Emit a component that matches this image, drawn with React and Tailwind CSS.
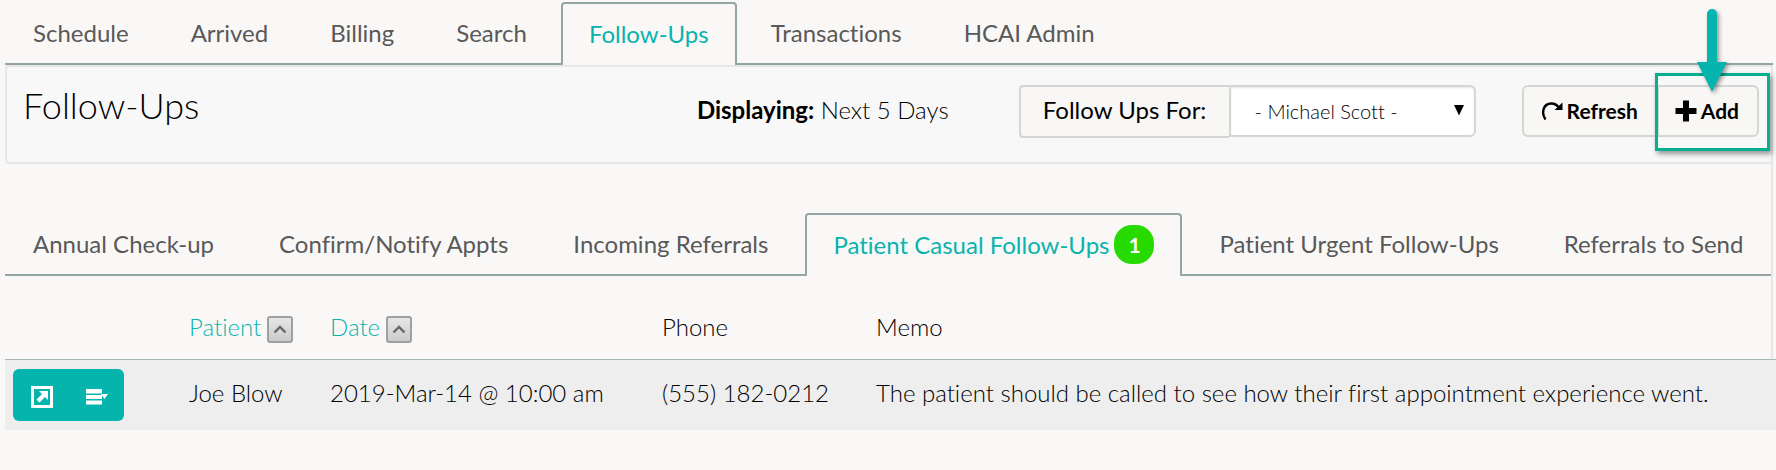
import React, { useState } from 'react';

const mainTabs = [
  { label: 'Schedule' },
  { label: 'Arrived' },
  { label: 'Billing' },
  { label: 'Search' },
  { label: 'Follow-Ups' },
  { label: 'Transactions' },
  { label: 'HCAI Admin' },
];

const typeTabs = [
  { label: 'Annual Check-up' },
  { label: 'Confirm/Notify Appts' },
  { label: 'Incoming Referrals' },
  { label: 'Patient Casual Follow-Ups', count: 1 },
  { label: 'Patient Urgent Follow-Ups' },
  { label: 'Referrals to Send' },
];

const rows = [
  {
    patient: 'Joe Blow',
    date: '2019-Mar-14 @ 10:00 am',
    phone: '(555) 182-0212',
    memo: 'The patient should be called to see how their first appointment experience went.',
  },
];

const Tabs = ({ tabs, active, onSelect, gap }) => (
  <nav className={`flex h-[63px] border-b-2 border-[#95a5a6] whitespace-nowrap ${gap}`}>
    {tabs.map((tab) => (
      <a
        key={tab.label}
        href="#"
        onClick={(e) => {
          e.preventDefault();
          onSelect(tab.label);
        }}
        className={
          tab.label === active
            ? '-mb-[2px] flex items-center gap-[5px] rounded-t border-2 border-b-0 border-[#95a5a6] bg-[#faf8f6] px-[26px] pb-[2px] text-[#09b3ad]'
            : 'flex items-center px-7 text-[#595959]'
        }
      >
        {tab.label}
        {tab.count && (
          <span className="flex h-[39px] w-10 items-center justify-center rounded-[18px] bg-[#27db00] text-[21px] font-bold text-white">
            {tab.count}
          </span>
        )}
      </a>
    ))}
  </nav>
);

const RefreshIcon = () => (
  <svg width="22" height="20" viewBox="0 0 22 20" aria-hidden="true">
    <path d="M4.500 18.500C0 12 2 2.500 10.500 2.500C14 2.500 16 4 18 6.500" fill="none" stroke="black" strokeWidth="2.400" />
    <path d="M21.500 1.500V9H13.500Z" fill="black" />
  </svg>
);

const PlusIcon = () => (
  <svg width="22" height="22" viewBox="0 0 22 22" aria-hidden="true">
    <path d="M8 0.500H14V8H21.500V14H14V21.500H8V14H0.500V8H8Z" fill="black" />
  </svg>
);

const OpenIcon = () => (
  <svg width="22" height="22" viewBox="0 0 22 22" aria-hidden="true">
    <path d="M1.500 1.500H20.500V20.500H1.500Z" fill="none" stroke="white" strokeWidth="3" />
    <path d="M8 5H17V14L14 11L8.500 16.500L5.500 13.500L11 8Z" fill="white" />
  </svg>
);

const MenuIcon = () => (
  <svg width="22" height="16" viewBox="0 0 22 16" aria-hidden="true">
    <path d="M0 0H16V4.500H0ZM0 6H16V10H0ZM0 11.500H16V15.500H0Z" fill="white" />
    <path d="M15 5H22L18.500 10Z" fill="white" />
  </svg>
);

const SortButton = ({ label }) => (
  <button
    aria-label={label}
    className="flex h-[27px] w-[26px] items-center justify-center rounded-[3px] border-2 border-[#a0a0a0] bg-linear-to-b from-[#e6e6e6] to-[#cccccc]"
  >
    <svg width="14" height="9" viewBox="0 0 14 9" aria-hidden="true">
      <path d="M1.500 7.500L7 2L12.500 7.500" fill="none" stroke="#666666" strokeWidth="2.400" />
    </svg>
  </button>
);

// arrow and frame that point out the Add button
const AddCallout = () => (
  <div className="pointer-events-none absolute -top-3 -right-[11px] -bottom-[14px] -left-[3px] border-3 border-[#06b08f] shadow-[2px_3px_5px_rgba(0,0,0,0.4)]">
    <svg
      className="absolute -top-[67px] left-1/2 -translate-x-1/2 drop-shadow-[2px_2px_2px_rgba(0,0,0,0.4)]"
      width="30"
      height="84"
      viewBox="0 0 30 84"
      aria-hidden="true"
    >
      <path d="M10 5A5 5 0 0 1 20 5V53H30L15 83L0 53H10Z" fill="#06b4ae" />
    </svg>
  </div>
);

const App = () => {
  const [mainTab, setMainTab] = useState('Follow-Ups');
  const [typeTab, setTypeTab] = useState('Patient Casual Follow-Ups');

  return (
    <div className="min-h-screen overflow-hidden bg-[#faf8f6] pt-[2px] pr-[3px] pl-[5px] font-['Lato',sans-serif] text-2xl leading-8 text-black [font-variant-ligatures:none]">
      <Tabs tabs={mainTabs} active={mainTab} onSelect={setMainTab} gap="gap-[6px]" />

      <main className="border-r-2 border-[#e7e7e7]">
        <header className="flex h-[99px] rounded-l border-2 border-r-0 border-[#e7e7e7] bg-[#f8f8f8] pt-[18px] pr-3 pl-4">
          <h1 className="flex-1 text-4xl leading-10 font-light">Follow-Ups</h1>
          <p className="mr-[70px] pt-[9px] font-light">
            <b className="font-bold">Displaying:</b> Next 5 Days
          </p>

          <div className="mr-[46px] flex items-start">
            <label
              htmlFor="provider"
              className="flex h-[53px] w-[210px] items-center justify-center rounded-l border-2 border-r-0 border-[#d2d7d3] bg-[#f9f7f5] pb-1"
            >
              Follow Ups For:
            </label>
            <div className="relative">
              <select
                id="provider"
                className="h-[52px] w-[247px] appearance-none rounded-r-md border-2 border-[#d2d7d3] bg-white pl-6 text-xl font-light shadow-[inset_0_1px_2px_rgba(0,0,0,0.1)]"
              >
                <option>- Michael Scott -</option>
              </select>
              <svg className="pointer-events-none absolute top-5 right-3" width="10" height="11" viewBox="0 0 10 11" aria-hidden="true">
                <path d="M0 0H10L5 10.500Z" fill="black" />
              </svg>
            </div>
          </div>

          <div className="flex h-[52px] text-[21px] font-bold">
            <button className="flex items-center gap-1 rounded-l-md border-2 border-r-0 border-[#d2d7d3] bg-[#f9f7f5] pr-5 pl-[17px]">
              <RefreshIcon />
              Refresh
            </button>
            <div className="relative flex">
              <button className="flex items-center gap-1 rounded-r-md border-2 border-l border-[#d2d7d3] bg-[#f9f7f5] pr-[18px] pl-4">
                <PlusIcon />
                Add
              </button>
              <AddCallout />
            </div>
          </div>
        </header>

        <div className="mt-[49px]">
          <Tabs tabs={typeTabs} active={typeTab} onSelect={setTypeTab} gap="gap-[9px]" />
        </div>

        <div className="relative -mr-[5px]">
          <table className="w-full table-fixed text-left whitespace-nowrap">
            <thead>
              <tr className="h-[83px] border-b border-[#a9b7b7] *:pt-[19px] *:font-light">
                <th className="w-[184px]" aria-label="Actions" />
                <th className="w-[141px] text-[#09b3ad]">
                  <div className="flex items-end gap-[6px]">
                    Patient <SortButton label="Sort by patient" />
                  </div>
                </th>
                <th className="w-[332px] text-[#09b3ad]">
                  <div className="flex items-end gap-[6px]">
                    Date <SortButton label="Sort by date" />
                  </div>
                </th>
                <th className="w-[214px]">Phone</th>
                <th>Memo</th>
              </tr>
            </thead>
            <tbody>
              {rows.map((row) => (
                <tr key={row.patient} className="h-[71px] bg-[#eeeeee] font-light *:pb-1">
                  <td className="pt-1 pl-2">
                    <div className="flex h-[52px] w-[111px] overflow-hidden rounded-md bg-[#06b4ae]">
                      <button aria-label="Open" className="flex flex-1 items-center justify-center pt-1 pl-[2px]">
                        <OpenIcon />
                      </button>
                      <button aria-label="More actions" className="flex flex-1 items-center justify-center pt-1">
                        <MenuIcon />
                      </button>
                    </div>
                  </td>
                  <td>{row.patient}</td>
                  <td>{row.date}</td>
                  <td>{row.phone}</td>
                  <td>{row.memo}</td>
                </tr>
              ))}
            </tbody>
          </table>
        </div>
      </main>
    </div>
  );
};

export default App;
